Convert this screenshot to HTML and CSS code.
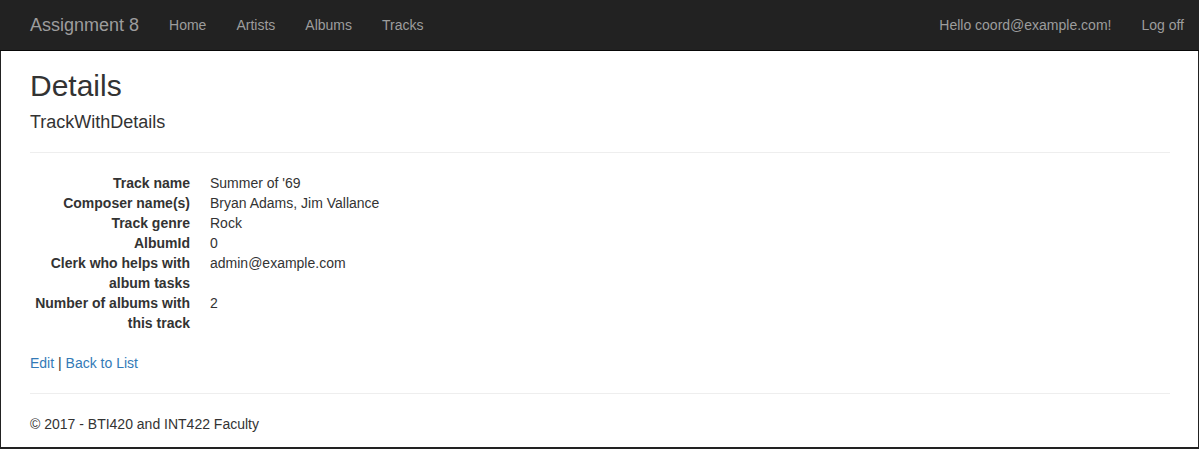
FILE: index.html
```html
<!DOCTYPE html>
<html lang="en">
<head>
<meta charset="utf-8">
<title>Details - Assignment 8</title>
<link rel="stylesheet" href="styles.css">
</head>
<body>
<div class="window">
  <nav class="navbar">
    <div class="nav-left">
      <a class="brand" href="#">Assignment 8</a>
      <a class="nav-link" href="#">Home</a>
      <a class="nav-link" href="#">Artists</a>
      <a class="nav-link" href="#">Albums</a>
      <a class="nav-link" href="#">Tracks</a>
    </div>
    <div class="nav-right">
      <a class="nav-link" href="#">Hello coord@example.com!</a>
      <a class="nav-link" href="#">Log off</a>
    </div>
  </nav>
  <div class="page">
    <h2 class="title">Details</h2>
    <h4 class="subtitle">TrackWithDetails</h4>
    <hr class="rule">
    <dl class="details">
      <dt>Track name</dt><dd>Summer of '69</dd>
      <dt>Composer name(s)</dt><dd>Bryan Adams, Jim Vallance</dd>
      <dt>Track genre</dt><dd>Rock</dd>
      <dt>AlbumId</dt><dd>0</dd>
      <dt>Clerk who helps with album tasks</dt><dd>admin@example.com</dd>
      <dt>Number of albums with this track</dt><dd>2</dd>
    </dl>
    <p class="actions"><a href="#">Edit</a> | <a href="#">Back to List</a></p>
    <hr class="rule">
    <footer class="footer">&copy; 2017 - BTI420 and INT422 Faculty</footer>
  </div>
</div>
</body>
</html>
```

FILE: styles.css
```css
html, body {
  margin: 0;
  padding: 0;
  background: #fff;
}
body {
  font-family: "Liberation Sans", Arial, Helvetica, sans-serif;
  font-size: 14px;
  line-height: 20px;
  color: #333;
}
a {
  color: #337ab7;
  text-decoration: none;
}
.window {
  width: 1199px;
  height: 449px;
  display: flex;
  flex-direction: column;
  overflow: hidden;
}
.navbar {
  height: 50px;
  flex: none;
  background: #222;
  border-bottom: 1px solid #080808;
  display: flex;
  justify-content: space-between;
  align-items: stretch;
  padding: 0 0 0 15px;
}
.nav-left, .nav-right {
  display: flex;
  align-items: stretch;
}
.brand {
  color: #9d9d9d;
  font-size: 18px;
  line-height: 20px;
  padding: 15px;
}
.nav-link {
  color: #9d9d9d;
  padding: 15px;
  line-height: 20px;
}
.page {
  flex: 1;
  border-left: 1px solid #222;
  border-right: 1px solid #222;
  border-bottom: 2px solid #222;
  padding: 18px 28px 0 29px;
  overflow: hidden;
}
.title {
  margin: 0 0 10px;
  font-size: 30px;
  line-height: 33px;
  font-weight: 500;
}
.subtitle {
  margin: 0 0 10px;
  font-size: 18px;
  line-height: 20px;
  font-weight: 500;
}
.rule {
  margin: 20px 0;
  border: 0;
  border-top: 1px solid #eee;
}
.details {
  margin: 0 0 20px;
  display: grid;
  grid-template-columns: 160px 1fr;
  column-gap: 20px;
}
.details dt {
  font-weight: bold;
  text-align: right;
}
.details dd {
  margin: 0;
}
.actions {
  margin: 0;
}
.footer {
  line-height: 20px;
}
```
